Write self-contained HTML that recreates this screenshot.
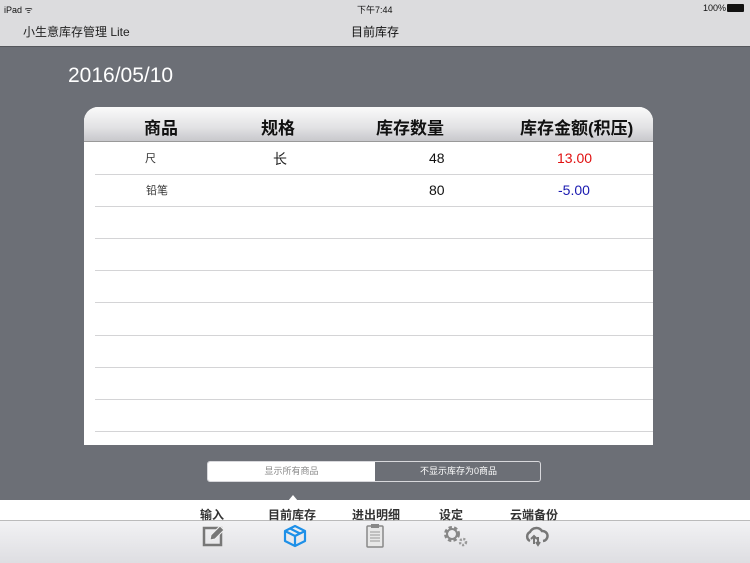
<!DOCTYPE html><html><head><meta charset="utf-8"><style>
*{margin:0;padding:0;box-sizing:border-box}
body{width:750px;height:563px;overflow:hidden;position:relative;background:#6c6f76;font-family:"Liberation Sans","Noto Sans CJK SC",sans-serif}
.a{position:absolute}
</style></head><body>
<div class="a" style="left:0;top:0;width:750px;height:47px;background:#dcdcde;border-bottom:1px solid #55575c"></div>
<div class="a" style="left:4px;top:3px;font-size:9px;color:#111">iPad ᯤ</div>
<div class="a" style="left:357px;top:3px;font-size:9px;color:#111">下午7:44</div>
<div class="a" style="left:703px;top:3px;font-size:9px;color:#111">100%</div>
<div class="a" style="left:727px;top:4px;width:17px;height:8px;background:#111;border-radius:1px"></div>
<div class="a" style="left:23px;top:23px;font-size:12px;color:#222">小生意库存管理 Lite</div>
<div class="a" style="left:351px;top:23px;font-size:12px;color:#111">目前库存</div>
<div class="a" style="left:68px;top:64px;font-size:21px;color:#fff">2016/05/10</div>
<div class="a" style="left:84px;top:107px;width:569px;height:338px;background:#fff;border-radius:14px 14px 0 0;overflow:hidden">
<div class="a" style="left:0;top:0;width:569px;height:35px;background:linear-gradient(#fafafa,#e2e2e4 60%,#c8c8cc);border-bottom:1px solid #999"></div>
<div class="a" style="left:60px;top:7px;font-size:17px;font-weight:bold;color:#111">商品</div>
<div class="a" style="left:177px;top:7px;font-size:17px;font-weight:bold;color:#111">规格</div>
<div class="a" style="left:292px;top:7px;font-size:17px;font-weight:bold;color:#111">库存数量</div>
<div class="a" style="left:436px;top:7px;font-size:17px;font-weight:bold;color:#111">库存金额(积压)</div>
<div class="a" style="left:61px;top:43px;font-size:11px;color:#333">尺</div>
<div class="a" style="left:189px;top:42px;font-size:14px;color:#222">长</div>
<div class="a" style="left:345px;top:43px;font-size:14px;color:#111">48</div>
<div class="a" style="left:473px;top:43px;font-size:14px;color:#e01010">13.00</div>
<div class="a" style="left:62px;top:75px;font-size:11px;color:#333">铅笔</div>
<div class="a" style="left:345px;top:75px;font-size:14px;color:#111">80</div>
<div class="a" style="left:474px;top:75px;font-size:14px;color:#1a1ab0">-5.00</div>
</div>
<div id="lines"></div>
<script>
var y=[174,206,238,270,302,335,367,399,431],h='';
y.forEach(function(v){h+='<div class="a" style="left:95px;top:'+v+'px;width:558px;height:1px;background:#d4d4d6"></div>'});
document.getElementById('lines').innerHTML=h;
</script>
<div class="a" style="left:207px;top:461px;width:334px;height:21px;border:1px solid #d8d8dc;border-radius:3px;overflow:hidden;font-size:9px">
<div class="a" style="left:0;top:0;width:167px;height:19px;background:#fff;color:#888;text-align:center;line-height:19px">显示所有商品</div>
<div class="a" style="left:167px;top:0;width:167px;height:19px;color:#fff;text-align:center;line-height:19px">不显示库存为0商品</div>
</div>
<div class="a" style="left:0;top:500px;width:750px;height:21px;background:#fff;border-bottom:1px solid #bbb"></div>
<div class="a" style="left:288px;top:495px;width:0;height:0;border-left:5px solid transparent;border-right:5px solid transparent;border-bottom:6px solid #fff"></div>
<div class="a" style="left:0;top:521px;width:750px;height:42px;background:linear-gradient(#f2f2f4,#dedee2)"></div>
<div class="a" style="left:200px;top:506px;font-size:12px;font-weight:bold;color:#333">输入</div>
<div class="a" style="left:268px;top:506px;font-size:12px;font-weight:bold;color:#333">目前库存</div>
<div class="a" style="left:352px;top:506px;font-size:12px;font-weight:bold;color:#333">进出明细</div>
<div class="a" style="left:439px;top:506px;font-size:12px;font-weight:bold;color:#333">设定</div>
<div class="a" style="left:510px;top:506px;font-size:12px;font-weight:bold;color:#333">云端备份</div>
<svg class="a" style="left:201px;top:524px" width="26" height="24"><rect x="3" y="4" width="17" height="17" fill="none" stroke="#777" stroke-width="2.5"/><path d="M9 16 L10 11 L19 2 L23 6 L14 15 Z" fill="#777" stroke="#f0f0f0" stroke-width="1"/></svg>
<svg class="a" style="left:282px;top:523px" width="26" height="26"><path d="M13 3 L23 8 L23 18 L13 23 L3 18 L3 8 Z M3 8 L13 13 L23 8 M13 13 L13 23 M8 5.5 L18 10.5" fill="none" stroke="#1e90e8" stroke-width="2.2" stroke-linejoin="round"/></svg>
<svg class="a" style="left:364px;top:523px" width="22" height="26"><rect x="3" y="3" width="16" height="21" rx="1" fill="#e8e8e8" stroke="#888" stroke-width="1.5"/><rect x="7" y="1" width="8" height="4" fill="#888"/><path d="M6 9h10M6 12h10M6 15h10M6 18h10" stroke="#999"/></svg>
<svg class="a" style="left:442px;top:524px" width="28" height="24"><circle cx="10" cy="10" r="6" fill="none" stroke="#888" stroke-width="4" stroke-dasharray="3 2"/><circle cx="10" cy="10" r="5" fill="none" stroke="#888" stroke-width="2"/><circle cx="21" cy="18" r="3" fill="none" stroke="#999" stroke-width="2.5" stroke-dasharray="2 1.5"/></svg>
<svg class="a" style="left:523px;top:524px" width="26" height="26"><path d="M7 17 A5 5 0 0 1 7 8 A7 7 0 0 1 19 7 A5 5 0 0 1 20 17" fill="none" stroke="#777" stroke-width="2.5"/><path d="M11 20 L11 13 M8 15 L11 12 L14 15 M15 13 L15 20 M13 18 L15 21 L17 18" stroke="#777" stroke-width="2" fill="none"/></svg>
</body></html>
